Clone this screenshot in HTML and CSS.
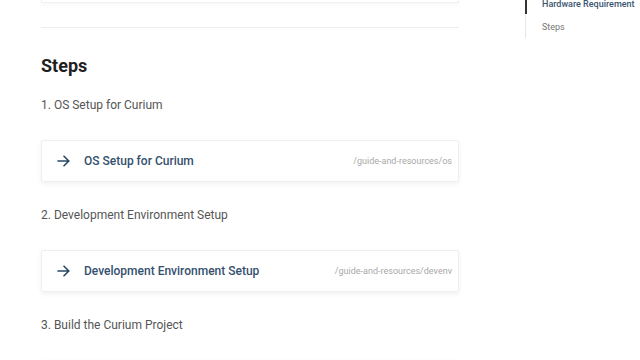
FILE: index.html
```html
<!DOCTYPE html>
<html>
<head>
    <meta charset="utf-8">
    <title>Steps</title>
    <link rel="stylesheet" href="styles.css">
</head>
<body>
    <div class="page">
        <div class="content">
            <div class="card-tail"></div>
            <hr class="divider">
            <h2 class="title">Steps</h2>

            <p class="step">1. OS Setup for Curium</p>
            <a class="link-card" href="#">
                <span class="arrow">
                    <svg width="13" height="12" viewBox="0 0 13 12"><path d="M1 6H12M7 1.2L11.8 6L7 10.8" fill="none" stroke="#2b4866" stroke-width="1.6" stroke-linecap="round" stroke-linejoin="round"/></svg>
                </span>
                <span class="link-title">OS Setup for Curium</span>
                <span class="link-path">/guide-and-resources/os</span>
            </a>

            <p class="step">2. Development Environment Setup</p>
            <a class="link-card" href="#">
                <span class="arrow">
                    <svg width="13" height="12" viewBox="0 0 13 12"><path d="M1 6H12M7 1.2L11.8 6L7 10.8" fill="none" stroke="#2b4866" stroke-width="1.6" stroke-linecap="round" stroke-linejoin="round"/></svg>
                </span>
                <span class="link-title">Development Environment Setup</span>
                <span class="link-path">/guide-and-resources/devenv</span>
            </a>

            <p class="step">3. Build the Curium Project</p>
            <a class="link-card" href="#"></a>
        </div>

        <div class="toc">
            <div class="toc-item active">Hardware Requirement</div>
            <div class="toc-item">Steps</div>
        </div>
    </div>
</body>
</html>
```

FILE: styles.css
```css
*{
    padding: 0;
    margin: 0;
    box-sizing: border-box;
}
body{
    background: #fff;
    font-family: Roboto, "Liberation Sans", sans-serif;
    overflow: hidden;
}
.page{
    display: flex;
    height: 360px;
    overflow: hidden;
}
.content{
    width: 418px;
    margin-left: 41px;
}
.card-tail{
    height: 3px;
    border: 1px solid #f0f0f0;
    border-top: none;
    box-shadow: 0 2px 4px rgba(0, 0, 0, 0.04);
}
.divider{
    border: none;
    border-top: 1px solid #eeeeee;
    margin-top: 24px;
}
.title{
    font-size: 18px;
    font-weight: 700;
    color: #1f1f1f;
    margin-top: 27px;
    line-height: 22px;
}
.step{
    font-size: 12px;
    color: #555;
    line-height: 16px;
}
.title + .step{
    margin-top: 20px;
}
.link-card{
    display: flex;
    align-items: center;
    height: 42px;
    margin-top: 27px;
    margin-bottom: 25px;
    padding: 0 6px 0 15px;
    border: 1px solid #efefef;
    border-radius: 2px;
    box-shadow: 0 2px 5px rgba(0, 0, 0, 0.06);
    text-decoration: none;
}
.arrow{
    display: flex;
    width: 27px;
}
.link-title{
    flex: 1;
    font-size: 12px;
    font-weight: 500;
    color: #34506e;
}
.link-path{
    font-size: 9px;
    color: #a8a8a8;
}
.toc{
    margin-left: 66px;
    height: 38px;
    border-left: 1px solid #e6e6e6;
}
.toc-item{
    padding-left: 16px;
    font-size: 9px;
    color: #777;
    line-height: 12px;
    margin-bottom: 7px;
}
.toc-item.active{
    margin-top: -2px;
    margin-left: -1px;
    padding-left: 15px;
    border-left: 2px solid #333;
    height: 16px;
    color: #3b5570;
    font-weight: 500;
}
```
